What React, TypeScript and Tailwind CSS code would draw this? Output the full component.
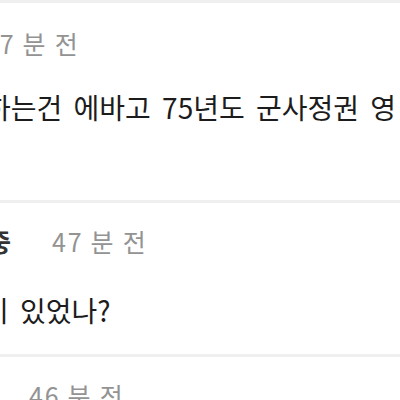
export default function App() {
  const font = { fontFamily: '"Noto Sans CJK KR", "Noto Sans", sans-serif' };
  return (
    <div className="w-[400px] h-[400px] overflow-hidden bg-white" style={font}>
      <div className="h-[3px] bg-[#efefef]" />
      <div className="h-[197px] pt-[20px] whitespace-nowrap">
        <div className="text-[25px] leading-[40px] text-[#939393] tracking-[0.07em] ml-[-16px]">47 분 전</div>
        <div className="mt-[24px] text-[28px] leading-[40px] text-[#1c1c1c] [word-spacing:5px] ml-[-15px]">하는건 에바고 75년도 군사정권 영</div>
      </div>
      <div className="h-[3px] bg-[#efefef]" />
      <div className="h-[151px] pt-[18px] whitespace-nowrap">
        <div className="flex items-center gap-[41px] ml-[-12px]">
          <span className="text-[25px] leading-[40px] font-bold text-[#333]">중</span>
          <span className="text-[25px] leading-[40px] text-[#939393] tracking-[0.07em]">47 분 전</span>
        </div>
        <div className="mt-[29px] text-[28px] leading-[40px] text-[#1c1c1c] [word-spacing:5px] ml-[-17px]">이 있었나?</div>
      </div>
      <div className="h-[3px] bg-[#efefef]" />
      <div className="pt-[18px] whitespace-nowrap">
        <div className="text-[25px] leading-[40px] text-[#939393] tracking-[0.07em] ml-[29px]">46 분 전</div>
      </div>
    </div>
  );
}
